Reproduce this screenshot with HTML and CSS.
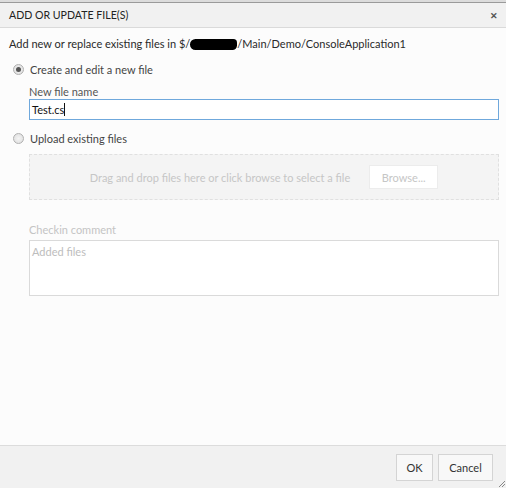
FILE: index.html
```html
<!DOCTYPE html>
<html>
<head>
<meta charset="utf-8">
<link rel="stylesheet" href="styles.css">
</head>
<body>
<div class="backdrop"></div>
<div class="dialog">
  <div class="header">
    <span class="title">ADD OR UPDATE FILE(S)</span>
    <span class="close">&#x2715;</span>
  </div>
  <div class="content">
    <div class="path">Add new or replace existing files in $/<span class="redact"></span>/Main/Demo/ConsoleApplication1</div>
    <label class="option"><span class="radio checked"></span>Create and edit a new file</label>
    <div class="sub">
      <div class="label">New file name</div>
      <div class="input focused">Test.cs<span class="caret"></span></div>
    </div>
    <label class="option second"><span class="radio"></span>Upload existing files</label>
    <div class="sub">
      <div class="dropzone">
        <span class="droptext">Drag and drop files here or click browse to select a file</span>
        <span class="browse">Browse...</span>
      </div>
      <div class="label muted comment-label">Checkin comment</div>
      <div class="textarea">Added files</div>
    </div>
  </div>
  <div class="footer">
    <span class="btn ok">OK</span>
    <span class="btn cancel">Cancel</span>
    <svg class="grip" width="10" height="10" viewBox="0 0 10 10"><path d="M9 3 L3 9 M9 6 L6 9" stroke="#888" stroke-width="1"/></svg>
  </div>
</div>
</body>
</html>
```
FILE: styles.css
```css
html, body {
  margin: 0;
  padding: 0;
}
body {
  width: 506px;
  height: 488px;
  overflow: hidden;
  font-family: "Segoe UI", "Lato", "Open Sans", sans-serif;
  font-size: 11px;
  color: #2a2a2a;
  background: #fcfcfc;
  display: flex;
  flex-direction: column;
}
.backdrop {
  height: 2px;
  background: #dcdcdc;
  border-bottom: 1px solid #9a9a9a;
  flex: none;
}
.dialog {
  flex: 1;
  display: flex;
  flex-direction: column;
  background: #fcfcfc;
}
.header {
  height: 24px;
  flex: none;
  background: #f1f1f1;
  border-bottom: 1px solid #dadada;
  display: flex;
  align-items: center;
  justify-content: space-between;
  padding: 0 8px 0 9px;
}
.title {
  font-size: 10.6px;
  color: #222;
}
.close {
  font-size: 9px;
  font-weight: bold;
  color: #555;
}
.content {
  flex: 1;
  padding: 8px 7px 0 9px;
}
.path {
  height: 16px;
  line-height: 16px;
  display: flex;
  align-items: center;
}
.redact {
  display: inline-block;
  width: 47px;
  height: 11px;
  background: #000;
  border-radius: 6px 4px 5px 6px;
}
.option {
  display: flex;
  align-items: center;
  height: 16px;
  margin-top: 9px;
  color: #444;
}
.option.second {
  margin-top: 10px;
}
.radio {
  width: 9px;
  height: 9px;
  border: 1px solid #b0b0b0;
  border-radius: 50%;
  background: radial-gradient(circle, #f4f4f4 0%, #dcdcdc 100%);
  margin: 0 6px 0 4px;
  box-sizing: content-box;
  position: relative;
}
.radio.checked::after {
  content: "";
  position: absolute;
  left: 2px;
  top: 2px;
  width: 5px;
  height: 5px;
  border-radius: 50%;
  background: #555;
}
.sub {
  padding-left: 20px;
}
.label {
  color: #555;
  margin-top: 7px;
  height: 15px;
  line-height: 15px;
}
.muted {
  color: #c4c4c4;
}
.input {
  height: 21px;
  box-sizing: border-box;
  border: 1px solid #6fa8dc;
  background: #fff;
  padding: 0 2px;
  color: #111;
  display: flex;
  align-items: center;
}
.caret {
  display: inline-block;
  width: 1px;
  height: 13px;
  background: #111;
}
.dropzone {
  margin-top: 8px;
  height: 46px;
  box-sizing: border-box;
  border: 1px dashed #e0e0e0;
  background: #f4f4f4;
  display: flex;
  align-items: center;
  justify-content: center;
  gap: 19px;
}
.droptext {
  color: #c6c6c6;
}
.browse {
  width: 69px;
  height: 24px;
  box-sizing: border-box;
  background: #fff;
  border: 1px solid #ececec;
  color: #c6c6c6;
  display: flex;
  align-items: center;
  justify-content: center;
}
.comment-label {
  margin-top: 22px;
}
.textarea {
  margin-top: 3px;
  height: 56px;
  box-sizing: border-box;
  border: 1px solid #dadada;
  background: #fff;
  padding: 4px 2px;
  color: #bdbdbd;
}
.footer {
  height: 42px;
  flex: none;
  background: #f1f1f1;
  border-top: 1px solid #dcdcdc;
  display: flex;
  align-items: center;
  justify-content: flex-end;
  gap: 5px;
  padding-right: 13px;
  position: relative;
}
.btn {
  height: 27px;
  box-sizing: border-box;
  border: 1px solid #d4d4d4;
  background: #f8f8f8;
  color: #333;
  display: flex;
  align-items: center;
  justify-content: center;
}
.btn.ok {
  width: 37px;
}
.btn.cancel {
  width: 55px;
}
.grip {
  position: absolute;
  right: 0;
  bottom: 0;
}
```
